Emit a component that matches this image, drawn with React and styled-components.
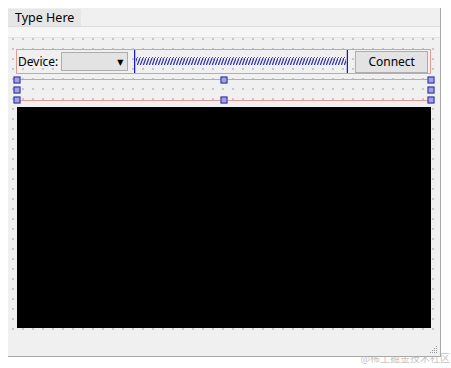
import React from 'react';
import styled, { createGlobalStyle } from 'styled-components';

const GlobalStyle = createGlobalStyle`
  body {
    margin: 8px 0 0 8px;
    background: #fff;
    font-family: "Noto Sans", "DejaVu Sans", sans-serif;
  }
`;

const Form = styled.div`
  position: relative;
  width: 432px;
  height: 348px;
  background: #f0f0f0;
  border-right: 1px solid #a8a8a8;
  border-bottom: 1px solid #a8a8a8;
  display: flex;
  flex-direction: column;
`;

const MenuBar = styled.div`
  height: 18px;
  display: flex;
  align-items: stretch;
  border-bottom: 1px solid #dcdcdc;
`;

const MenuItem = styled.div`
  display: flex;
  align-items: center;
  padding: 0 7px 0 7px;
  margin-top: 1px;
  background: #e6e6e6;
  font-size: 12.5px;
  color: #000;
`;

const ToolStrip = styled.div`
  height: 10px;
  background: #f6f6f6;
  border-bottom: 1px solid #e4e4e4;
`;

const Central = styled.div`
  box-sizing: border-box;
  height: 295px;
  padding: 11px 9px 0 8px;
  background-color: #f0f0f0;
  background-image: radial-gradient(circle, #b0b0b0 0.6px, transparent 0.9px);
  background-size: 10px 10px;
  background-position: 0px -4px;
  display: flex;
  flex-direction: column;
`;

const StatusBar = styled.div`
  flex: 1;
`;

const Row = styled.div`
  height: 23px;
  border: 1px solid #e59a94;
  display: flex;
  align-items: center;
  padding: 0 2px 0 1px;
`;

const Label = styled.span`
  font-size: 12px;
  color: #000;
  width: 43px;
`;

const Combo = styled.div`
  width: 68px;
  height: 19px;
  background: #e3e3e3;
  border: 1px solid #adadad;
  display: flex;
  align-items: center;
  justify-content: flex-end;
  padding-right: 4px;
  box-sizing: border-box;
  font-size: 8px;
  color: #000;
`;

const Spring = styled.div`
  margin-left: 6px;
  width: 214px;
  height: 23px;
  display: flex;
`;

const Button = styled.div`
  margin-left: 7px;
  width: 73px;
  height: 22px;
  box-sizing: border-box;
  background: #e3e3e3;
  border: 1px solid #adadad;
  display: flex;
  align-items: center;
  justify-content: center;
  font-size: 12px;
  color: #000;
`;

const Selection = styled.div`
  position: relative;
  margin: 5px 0 0 1px;
  height: 20px;
  border-top: 1px solid #e59a94;
  border-bottom: 1px solid #e59a94;
`;

const Handle = styled.span`
  position: absolute;
  width: 5px;
  height: 5px;
  background: #a3a3d6;
  border: 1px solid #2a2ab8;
  left: ${(p) => p.$x};
  top: ${(p) => p.$y};
  transform: translate(-50%, -50%);
`;

const Screen = styled.div`
  margin: 6px 0 0 1px;
  height: 221px;
  background: #000;
`;

const Grip = styled.svg`
  position: absolute;
  right: 2px;
  bottom: 2px;
`;

const Watermark = styled.div`
  width: 442px;
  text-align: right;
  margin-top: -5px;
  font-family: "Noto Sans CJK SC", sans-serif;
  font-size: 10px;
  line-height: 12px;
  color: #c4c4c4;
`;

const handles = [
  ['0px', '0px'], ['50%', '0px'], ['100%', '0px'],
  ['0px', '50%'], ['100%', '50%'],
  ['0px', '100%'], ['50%', '100%'], ['100%', '100%'],
];

export default function App() {
  return (
    <>
      <GlobalStyle />
      <Form>
        <MenuBar>
          <MenuItem>Type Here</MenuItem>
        </MenuBar>
        <ToolStrip />
        <Central>
          <Row>
            <Label>Device:</Label>
            <Combo>&#9660;</Combo>
            <Spring>
              <svg width="214" height="23">
                <defs>
                  <pattern id="zig" width="3" height="8" patternUnits="userSpaceOnUse">
                    <path d="M0 8 L3 0" stroke="#2b2bb0" strokeWidth="1.2" />
                  </pattern>
                </defs>
                <line x1="0.5" y1="0" x2="0.5" y2="23" stroke="#1c1cb8" strokeWidth="1.5" />
                <rect x="2" y="7" width="210" height="8" fill="url(#zig)" />
                <line x1="213.5" y1="0" x2="213.5" y2="23" stroke="#1c1cb8" strokeWidth="1.5" />
              </svg>
            </Spring>
            <Button>Connect</Button>
          </Row>
          <Selection>
            {handles.map(([x, y], i) => (
              <Handle key={i} $x={x} $y={y} />
            ))}
          </Selection>
          <Screen />
        </Central>
        <StatusBar />
        <Grip width="9" height="9">
          {[[7, 1], [5, 3], [7, 3], [3, 5], [5, 5], [7, 5], [1, 7], [3, 7], [5, 7], [7, 7]].map(([x, y], i) => (
            <rect key={i} x={x} y={y} width="1" height="1" fill="#9a9a9a" />
          ))}
        </Grip>
      </Form>
      <Watermark>@稀土掘金技术社区</Watermark>
    </>
  );
}
